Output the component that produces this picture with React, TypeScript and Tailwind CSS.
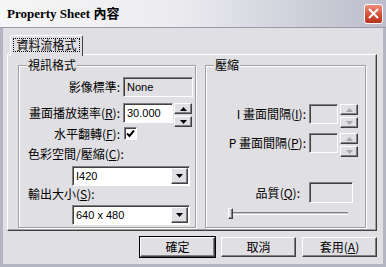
import React from 'react';

const CJK = "font-['Noto_Sans_CJK_TC','Noto_Sans',sans-serif]";
const LATIN = "font-['Liberation_Sans',Arial,sans-serif]";
const FACE = 'bg-[#e0dfe3]';
const RAISED =
  'border border-t-white border-l-white border-b-[#404040] border-r-[#404040] shadow-[inset_-1px_-1px_0_#808080]';
const SUNKEN =
  'border border-t-[#808080] border-l-[#808080] border-b-white border-r-white shadow-[inset_1px_1px_0_#404040]';
const ETCHED = 'border border-[#a0a0a0] shadow-[inset_1px_1px_0_#fff,1px_1px_0_#fff]';

function Arrow({ down, disabled }: { down?: boolean; disabled?: boolean }) {
  return (
    <svg width="7" height="4" viewBox="0 0 7 4">
      <path d={down ? 'M0 0h7L3.5 4z' : 'M0 4h7L3.5 0z'} fill={disabled ? '#a8a8a8' : '#000'} />
    </svg>
  );
}

function Spin({ disabled }: { disabled?: boolean }) {
  return (
    <div className="flex flex-col gap-[2px]">
      <div className={`${RAISED} ${FACE} w-[18px] h-[11px] flex items-center justify-center`}>
        <Arrow disabled={disabled} />
      </div>
      <div className={`${RAISED} ${FACE} w-[18px] h-[11px] flex items-center justify-center`}>
        <Arrow down disabled={disabled} />
      </div>
    </div>
  );
}

function Combo({ value }: { value: string }) {
  return (
    <div className={`${SUNKEN} bg-white w-[118px] h-[20px] flex items-center`}>
      <span className={`${LATIN} flex-1 pl-[3px] text-[11px] leading-none`}>{value}</span>
      <div className={`${RAISED} ${FACE} w-[17px] h-[16px] mr-[1px] flex items-center justify-center`}>
        <Arrow down />
      </div>
    </div>
  );
}

// mnemonic letter, e.g. (R)
function Key({ k, colon = true }: { k: string; colon?: boolean }) {
  return (
    <>
      (<u>{k}</u>){colon ? ':' : ''}
    </>
  );
}

function Legend({ text }: { text: string }) {
  return (
    <span className={`absolute left-[8px] top-[-8px] px-[1px] ${FACE} text-[12px] leading-[14px]`}>{text}</span>
  );
}

function Button({ label, primary }: { label: React.ReactNode; primary?: boolean }) {
  return (
    <div
      className={`w-[75px] h-[20px] flex items-center justify-center text-[12px] ${FACE} ${RAISED} ${
        primary ? 'outline outline-1 outline-black' : ''
      }`}
    >
      {label}
    </div>
  );
}

export default function App() {
  return (
    <div className={`w-[386px] h-[267px] ${FACE} ${CJK} text-black flex flex-col overflow-hidden`}>
      {/* title bar */}
      <div className="h-[28px] shrink-0 flex items-center justify-between pl-[7px] pr-[3px] border-b border-[#9a9aa8] bg-[linear-gradient(to_right,#f6f6f6,#ececf0_45%,#bcbccc)]">
        <span className="font-['Liberation_Serif','Noto_Sans_CJK_TC',serif] font-bold text-[13px] leading-none">
          Property Sheet 內容
        </span>
        <div className="w-[19px] h-[20px] rounded-[3px] border border-white bg-[linear-gradient(to_bottom,#ec8c7c,#d24a32_60%,#b8321e)] flex items-center justify-center">
          <svg width="11" height="11" viewBox="0 0 11 11">
            <path d="M1.5 1.5l8 8M9.5 1.5l-8 8" stroke="#fff" strokeWidth="2" strokeLinecap="round" />
          </svg>
        </div>
      </div>

      {/* body */}
      <div className="flex-1 flex flex-col border-x-[3px] border-b-[3px] border-[#b4b4c2]">
        {/* tab strip */}
        <div className="mt-[7px] ml-[7px] flex">
          <div className={`relative z-10 w-[73px] h-[21px] ${FACE} border-t border-l border-t-white border-l-white border-r border-r-[#404040] rounded-t-[2px] pt-[2px] px-[2px]`}>
            <div className="h-[14px] border border-dotted border-black flex items-center justify-center text-[12px] leading-none">
              資料流格式
            </div>
          </div>
        </div>

        {/* tab panel */}
        <div className="-mt-[2px] ml-[4px] w-[370px] h-[177px] border border-t-white border-l-white border-b-[#404040] border-r-[#404040] shadow-[inset_-1px_-1px_0_#a0a0a0] pt-[10px] pl-[10px] flex gap-[9px]">
          {/* video format group */}
          <div className={`relative w-[178px] h-[163px] ${ETCHED} flex flex-col text-[12px] leading-[14px]`}>
            <Legend text="視訊格式" />
            <div className="mt-[11px] flex items-center h-[20px]">
              <span className="w-[101px] text-right">影像標準:</span>
              <div className={`${SUNKEN} ml-[3px] w-[70px] h-[20px] flex items-center pl-[3px] ${LATIN} text-[11px]`}>
                None
              </div>
            </div>
            <div className="mt-[6px] flex items-start h-[24px]">
              <span className="w-[101px] h-[20px] flex items-center justify-end">
                畫面播放速率<Key k="R" />
              </span>
              <div className={`${SUNKEN} bg-white ml-[3px] w-[50px] h-[20px] flex items-center pl-[3px] ${LATIN} text-[11px]`}>
                30.000
              </div>
              <div className="ml-[1px]">
                <Spin />
              </div>
            </div>
            <div className="flex items-center h-[13px]">
              <span className="w-[101px] text-right">
                水平翻轉<Key k="F" />
              </span>
              <div className={`${SUNKEN} bg-white ml-[4px] w-[13px] h-[13px] flex items-center justify-center`}>
                <svg width="9" height="9" viewBox="0 0 9 9">
                  <path d="M1 4.5l2.5 2.5L8 1.5" stroke="#000" strokeWidth="2" fill="none" />
                </svg>
              </div>
            </div>
            <div className="mt-[7px] pl-[9px] h-[14px]">
              色彩空間/壓縮<Key k="C" />
            </div>
            <div className="mt-[5px] ml-[53px]">
              <Combo value="I420" />
            </div>
            <div className="mt-[1px] pl-[9px] h-[14px]">
              輸出大小<Key k="S" />
            </div>
            <div className="mt-[4px] ml-[53px]">
              <Combo value="640 x 480" />
            </div>
          </div>

          {/* compression group */}
          <div className={`relative w-[161px] h-[163px] ${ETCHED} flex flex-col text-[12px] leading-[14px]`}>
            <Legend text="壓縮" />
            <div className="mt-[38px] flex items-start h-[23px]">
              <span className="w-[100px] h-[20px] flex items-center justify-end">
                I 畫面間隔<Key k="I" />
              </span>
              <div className={`${SUNKEN} ml-[3px] w-[29px] h-[20px]`} />
              <div className="ml-[2px]">
                <Spin disabled />
              </div>
            </div>
            <div className="mt-[6px] flex items-start h-[23px]">
              <span className="w-[100px] h-[20px] flex items-center justify-end">
                P 畫面間隔<Key k="P" />
              </span>
              <div className={`${SUNKEN} ml-[3px] w-[29px] h-[20px]`} />
              <div className="ml-[2px]">
                <Spin disabled />
              </div>
            </div>
            <div className="mt-[26px] flex items-center h-[21px]">
              <span className="w-[94px] text-right">
                品質<Key k="Q" />
              </span>
              <div className={`${SUNKEN} ml-[9px] w-[44px] h-[21px]`} />
            </div>
            <div className="mt-[5px] ml-[22px] w-[120px] h-[11px] relative flex items-center">
              <div className="w-full h-[3px] border-t border-t-[#808080] border-b border-b-white bg-[#c8c8c8]" />
              <div className={`absolute left-0 top-0 w-[5px] h-[11px] ${FACE} ${RAISED}`} />
            </div>
          </div>
        </div>

        {/* buttons */}
        <div className="mt-[6px] flex justify-end gap-[6px] pr-[6px]">
          <Button label="確定" primary />
          <Button label="取消" />
          <Button
            label={
              <>
                套用<Key k="A" colon={false} />
              </>
            }
          />
        </div>
      </div>
    </div>
  );
}
